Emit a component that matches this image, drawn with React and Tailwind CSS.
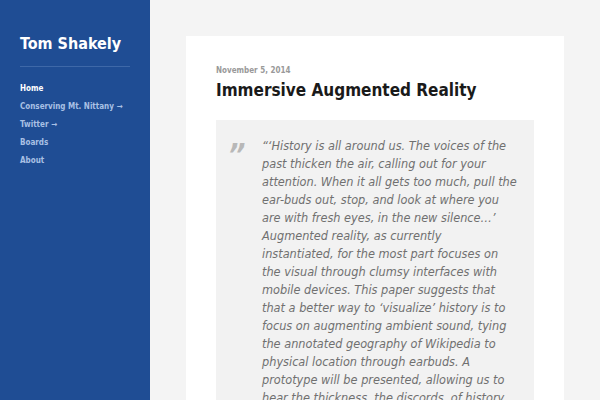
const NAV = [
    { label: 'Home', active: true },
    { label: 'Conserving Mt. Nittany →' },
    { label: 'Twitter →' },
    { label: 'Boards' },
    { label: 'About' }
]

const App = () => {
    return (
        <div className="flex w-[600px] h-[400px] overflow-hidden bg-[#f4f4f4] font-['DejaVu_Sans_Condensed','DejaVu_Sans',sans-serif] font-stretch-condensed">
            <aside className="w-[150px] shrink-0 bg-[#1f4d94] px-5 pt-[34px]">
                <h1 className="text-[16px] font-bold text-white leading-5">Tom Shakely</h1>
                <div className="mt-[12px] h-px bg-[#3e68a8]" />
                <nav className="mt-[13px] flex flex-col">
                    {NAV.map(({ label, active }) => (
                        <a
                            key={label}
                            className={`text-[8px] font-bold leading-[18px] ${active ? 'text-white' : 'text-[#a9c0e4]'}`}
                        >
                            {label}
                        </a>
                    ))}
                </nav>
            </aside>

            <main className="flex-1 pl-9 pr-9 pt-9">
                <article className="bg-white px-[30px] pt-[29px] pb-10">
                    <p className="text-[8px] font-bold text-[#999] leading-3">November 5, 2014</p>
                    <h2 className="mt-[1px] text-[17px] font-bold text-[#1a1a1a] leading-6">
                        Immersive Augmented Reality
                    </h2>
                    <blockquote className="mt-[18px] flex bg-[#f2f2f2] pl-[12px] pr-4 pt-[17px] pb-4">
                        <span className="w-[34px] shrink-0 pt-[3px] text-[30px] leading-[30px] font-bold italic text-[#b8b8b8]">”</span>
                        <p className="text-[12.6px] italic leading-[18px] text-[#707070]">
                            “‘History is all around us. The voices of the past thicken the air, calling out for your
                            attention. When it all gets too much, pull the ear-buds out, stop, and look at where you
                            are with fresh eyes, in the new silence…’ Augmented reality, as currently instantiated,{'\u00a0'}for
                            the most part focuses on the visual through clumsy interfaces with mobile devices.
                            This paper suggests that that a better way to ‘visualize’ history is to focus on
                            augmenting ambient sound, tying the annotated geography of Wikipedia to physical
                            location through earbuds. A prototype will be presented, allowing us to hear the
                            thickness, the discords, of history.
                        </p>
                    </blockquote>
                </article>
            </main>
        </div>
    )
}

export default App
